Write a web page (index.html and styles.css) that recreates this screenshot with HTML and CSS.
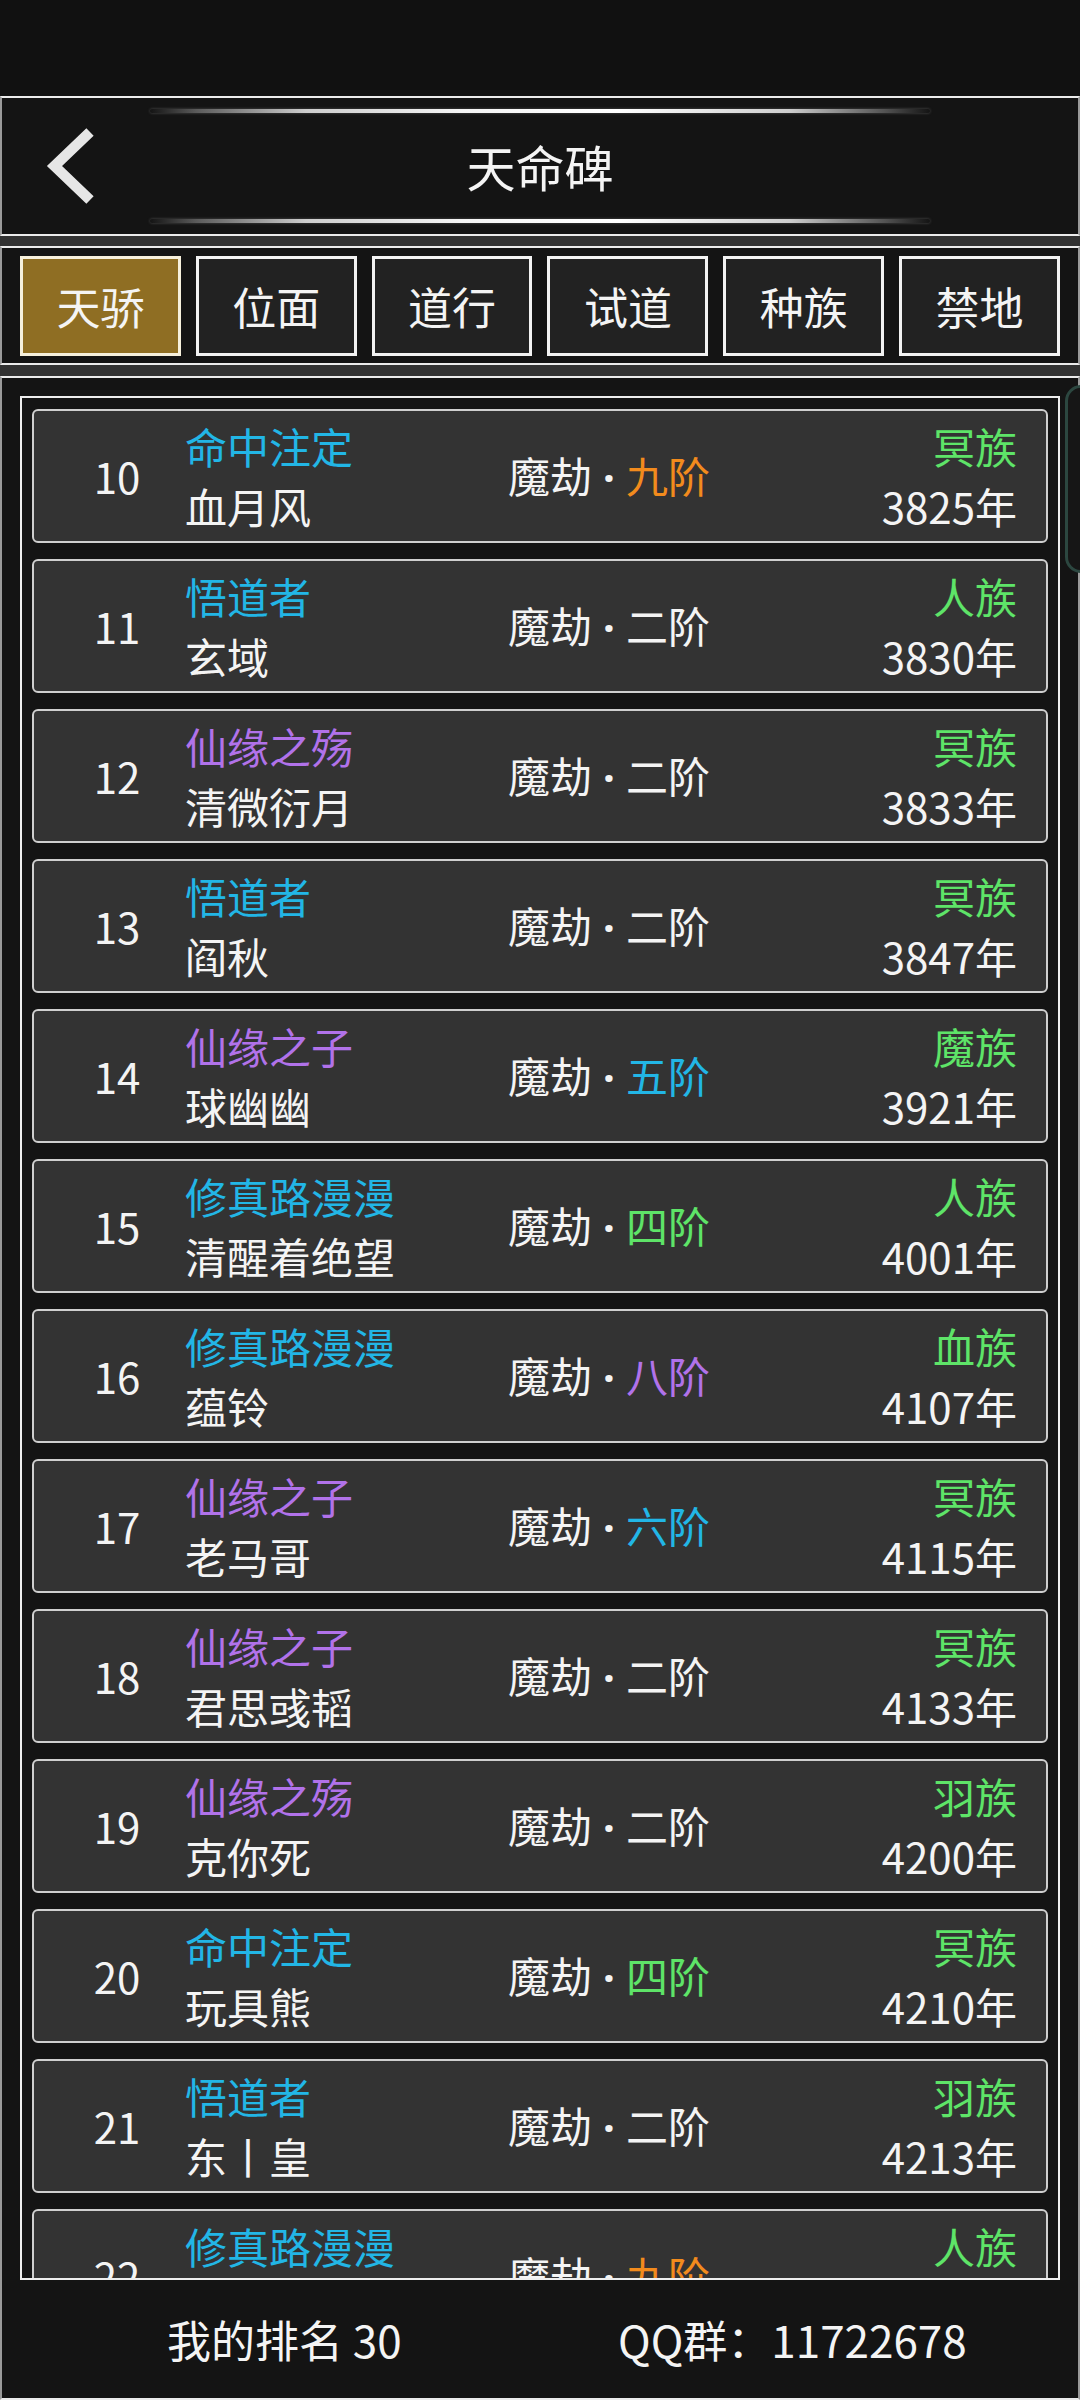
FILE: index.html
```html
<!DOCTYPE html>
<html lang="zh-CN">
<head>
<meta charset="utf-8">
<title>天命碑</title>
<link rel="stylesheet" href="styles.css">
</head>
<body>
<div class="page">
  <div class="status"></div>

  <header class="header panel">
    <div class="back">
      <svg width="148" height="136" viewBox="0 0 148 136">
        <polyline points="88,34 52.5,68 88,102" fill="none" stroke="#e6e6e6" stroke-width="10.5" stroke-linejoin="miter" stroke-linecap="butt"/>
      </svg>
    </div>
    <div class="title-col">
      <div class="glow-line"></div>
      <h1 class="title">天命碑</h1>
      <div class="glow-line"></div>
    </div>
  </header>

  <nav class="tabs panel">
    <div class="tab active">天骄</div>
    <div class="tab">位面</div>
    <div class="tab">道行</div>
    <div class="tab">试道</div>
    <div class="tab">种族</div>
    <div class="tab">禁地</div>
  </nav>

  <section class="list panel">
    <div class="thumb"></div>
    <div class="frame">
      <div class="rows">
        <div class="row"><div class="rank">10</div><div class="who"><div class="tag c-cyan">命中注定</div><div class="name">血月风</div></div><div class="stage">魔劫<span class="dot">·</span><span class="c-orange">九阶</span></div><div class="meta"><div class="race">冥族</div><div class="age">3825年</div></div></div>
        <div class="row"><div class="rank">11</div><div class="who"><div class="tag c-cyan">悟道者</div><div class="name">玄域</div></div><div class="stage">魔劫<span class="dot">·</span><span>二阶</span></div><div class="meta"><div class="race">人族</div><div class="age">3830年</div></div></div>
        <div class="row"><div class="rank">12</div><div class="who"><div class="tag c-purple">仙缘之殇</div><div class="name">清微衍月</div></div><div class="stage">魔劫<span class="dot">·</span><span>二阶</span></div><div class="meta"><div class="race">冥族</div><div class="age">3833年</div></div></div>
        <div class="row"><div class="rank">13</div><div class="who"><div class="tag c-cyan">悟道者</div><div class="name">阎秋</div></div><div class="stage">魔劫<span class="dot">·</span><span>二阶</span></div><div class="meta"><div class="race">冥族</div><div class="age">3847年</div></div></div>
        <div class="row"><div class="rank">14</div><div class="who"><div class="tag c-purple">仙缘之子</div><div class="name">球幽幽</div></div><div class="stage">魔劫<span class="dot">·</span><span class="c-cyan">五阶</span></div><div class="meta"><div class="race">魔族</div><div class="age">3921年</div></div></div>
        <div class="row"><div class="rank">15</div><div class="who"><div class="tag c-cyan">修真路漫漫</div><div class="name">清醒着绝望</div></div><div class="stage">魔劫<span class="dot">·</span><span class="c-green">四阶</span></div><div class="meta"><div class="race">人族</div><div class="age">4001年</div></div></div>
        <div class="row"><div class="rank">16</div><div class="who"><div class="tag c-cyan">修真路漫漫</div><div class="name">蕴铃</div></div><div class="stage">魔劫<span class="dot">·</span><span class="c-purple">八阶</span></div><div class="meta"><div class="race">血族</div><div class="age">4107年</div></div></div>
        <div class="row"><div class="rank">17</div><div class="who"><div class="tag c-purple">仙缘之子</div><div class="name">老马哥</div></div><div class="stage">魔劫<span class="dot">·</span><span class="c-cyan">六阶</span></div><div class="meta"><div class="race">冥族</div><div class="age">4115年</div></div></div>
        <div class="row"><div class="rank">18</div><div class="who"><div class="tag c-purple">仙缘之子</div><div class="name">君思彧韬</div></div><div class="stage">魔劫<span class="dot">·</span><span>二阶</span></div><div class="meta"><div class="race">冥族</div><div class="age">4133年</div></div></div>
        <div class="row"><div class="rank">19</div><div class="who"><div class="tag c-purple">仙缘之殇</div><div class="name">克你死</div></div><div class="stage">魔劫<span class="dot">·</span><span>二阶</span></div><div class="meta"><div class="race">羽族</div><div class="age">4200年</div></div></div>
        <div class="row"><div class="rank">20</div><div class="who"><div class="tag c-cyan">命中注定</div><div class="name">玩具熊</div></div><div class="stage">魔劫<span class="dot">·</span><span class="c-green">四阶</span></div><div class="meta"><div class="race">冥族</div><div class="age">4210年</div></div></div>
        <div class="row"><div class="rank">21</div><div class="who"><div class="tag c-cyan">悟道者</div><div class="name">东丨皇</div></div><div class="stage">魔劫<span class="dot">·</span><span>二阶</span></div><div class="meta"><div class="race">羽族</div><div class="age">4213年</div></div></div>
        <div class="row"><div class="rank">22</div><div class="who"><div class="tag c-cyan">修真路漫漫</div><div class="name">&nbsp;</div></div><div class="stage">魔劫<span class="dot">·</span><span class="c-orange">九阶</span></div><div class="meta"><div class="race">人族</div><div class="age">&nbsp;</div></div></div>
      </div>
    </div>
    <footer class="footer">
      <div class="my-rank">我的排名 30</div>
      <div class="qq">QQ群：11722678</div>
    </footer>
  </section>
</div>
</body>
</html>
```

FILE: styles.css
```css
* { box-sizing: border-box; }

html, body {
  margin: 0;
  padding: 0;
}

body {
  width: 1080px;
  height: 2400px;
  overflow: hidden;
  background: #333333;
  font-family: "Noto Sans CJK SC", "Noto Sans", sans-serif;
  color: #f2f2f2;
}

.page {
  width: 1080px;
  height: 2400px;
  display: flex;
  flex-direction: column;
}

.status {
  height: 96px;
  background: #111111;
  flex: none;
}

.panel {
  background: #141414;
  border-top: 2px solid #ececec;
  border-bottom: 2px solid #ececec;
  border-left: 2px solid #9a9a9a;
  border-right: 2px solid #9a9a9a;
  flex: none;
}

/* Header */
.header {
  height: 140px;
  display: grid;
  grid-template-columns: 148px 780px 1fr;
}

.back {
  display: flex;
}

.title-col {
  display: flex;
  flex-direction: column;
  padding: 11px 0;
}

.glow-line {
  height: 4px;
  border-radius: 2px;
  background: linear-gradient(90deg,
    rgba(120,120,120,0) 0%,
    rgba(150,150,150,0.55) 6%,
    rgba(225,225,225,0.9) 20%,
    #f4f4f4 40%,
    #ffffff 60%,
    rgba(225,225,225,0.9) 82%,
    rgba(150,150,150,0.5) 94%,
    rgba(120,120,120,0) 100%);
  box-shadow: 0 0 3px rgba(200,200,200,0.35);
}

.title {
  margin: 0;
  height: 106px;
  line-height: 106px;
  text-align: center;
  font-size: 49px;
  font-weight: 400;
  color: #f4f4f4;
}

/* Tabs */
.tabs {
  margin-top: 10px;
  height: 119px;
  padding: 8px 18px 7px 18px;
  display: grid;
  grid-template-columns: repeat(6, 1fr);
  column-gap: 15px;
}

.tab {
  height: 100px;
  border: 3px solid #f2f2f2;
  background: #222222;
  display: flex;
  align-items: center;
  justify-content: center;
  font-size: 44px;
  color: #f4f4f4;
}

.tab.active {
  background: #8f6e23;
  border-color: #f6f0dc;
}

/* List */
.list {
  position: relative;
  margin-top: 11px;
  flex: 1;
  display: flex;
  flex-direction: column;
  padding: 18px 18px 0 18px;
}

.thumb {
  position: absolute;
  top: 7px;
  left: 1063px;
  width: 40px;
  height: 188px;
  border: 3px solid #2c4740;
  border-radius: 16px;
  background: #161616;
}

.frame {
  height: 1884px;
  border: 2px solid #eeeeee;
  background: #141414;
  overflow: hidden;
  flex: none;
}

.rows {
  display: flex;
  flex-direction: column;
  gap: 16px;
  padding: 11px 10px;
}

.row {
  height: 134px;
  flex: none;
  background: #333333;
  border: 2px solid #cfcfcf;
  border-radius: 6px;
  display: grid;
  grid-template-columns: 151px 323px 1fr auto;
  align-items: center;
  padding-right: 29px;
  font-size: 42px;
  line-height: 60px;
}

.rank {
  text-align: center;
  padding-left: 15px;
  color: #f4f4f4;
}

.who {
  display: flex;
  flex-direction: column;
  white-space: nowrap;
}

.name { color: #f4f4f4; }

.stage {
  white-space: nowrap;
  color: #f4f4f4;
}

.dot {
  display: inline-block;
  width: 34px;
  text-align: center;
  font-family: "Noto Sans", "DejaVu Sans", sans-serif;
  font-weight: 700;
}

.meta {
  display: flex;
  flex-direction: column;
  align-items: flex-end;
  white-space: nowrap;
}

.race { color: #5ee468; }
.age { color: #f4f4f4; }

.c-cyan { color: #22b6e6; }
.c-purple { color: #b172ea; }
.c-orange { color: #f28b1d; }
.c-green { color: #5ee468; }

/* Footer */
.footer {
  flex: 1;
  display: flex;
  align-items: center;
  padding-left: 147px;
  font-size: 44px;
  color: #f4f4f4;
}

.my-rank {
  width: 451px;
}
```
